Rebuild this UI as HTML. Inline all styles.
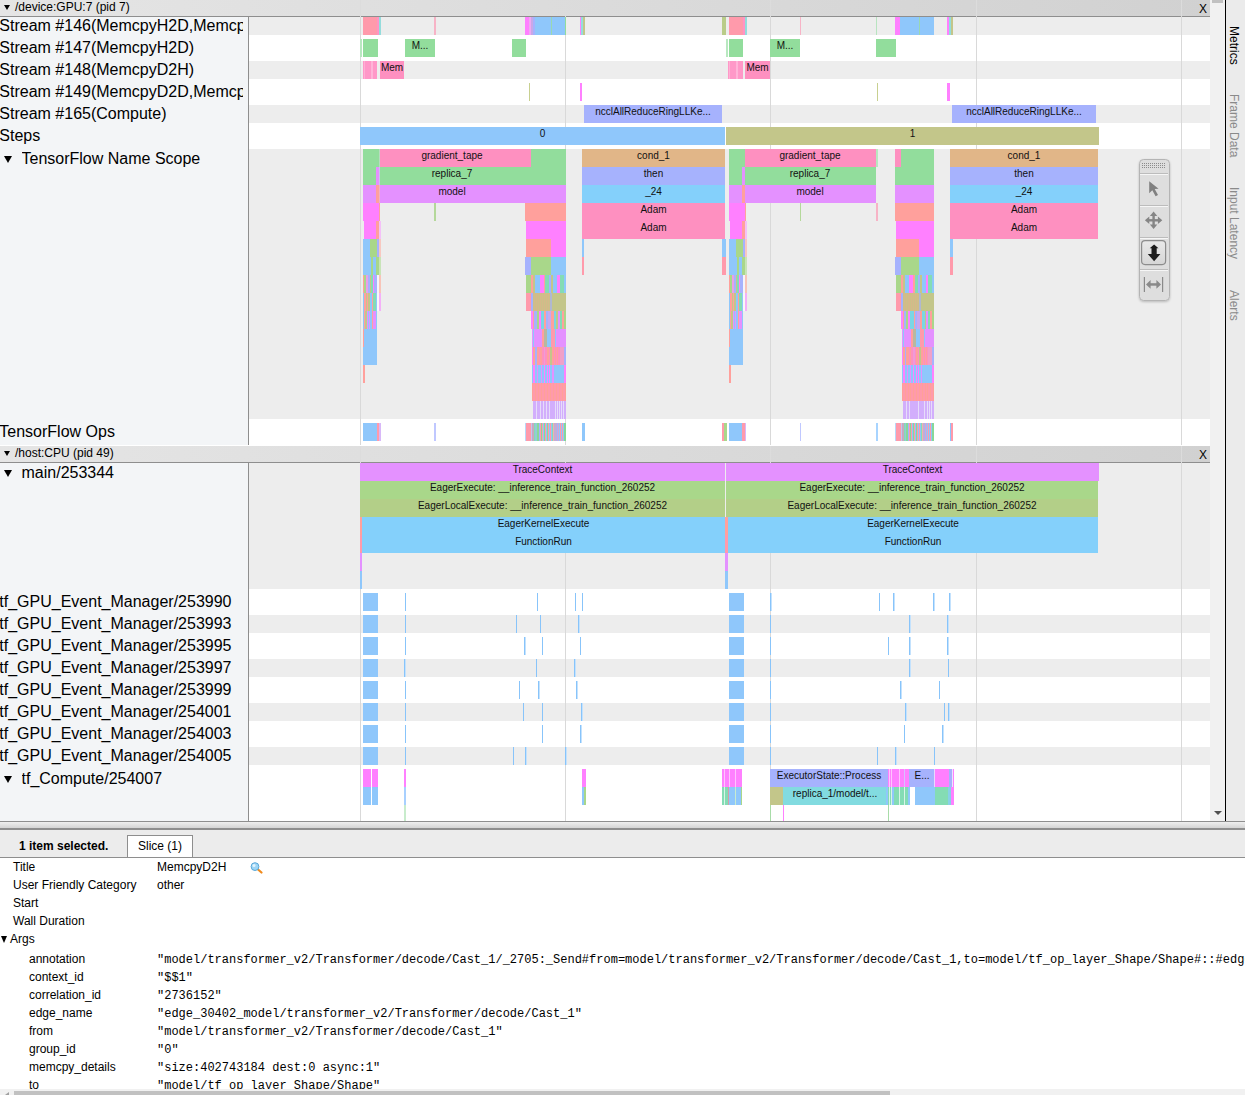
<!DOCTYPE html>
<html><head><meta charset="utf-8">
<style>
html,body{margin:0;padding:0;}
body{width:1245px;height:1095px;overflow:hidden;position:relative;background:#fff;font-family:"Liberation Sans",sans-serif;}
.r{position:absolute;}
.sl{position:absolute;width:300px;height:18px;line-height:13.5px;text-align:center;font-size:10px;color:#111;white-space:nowrap;}
#tv{position:absolute;left:0;top:0;width:1210px;height:821px;overflow:hidden;background:#fff;}
#lab{position:absolute;left:0;top:0;width:248px;height:821px;background:#f3f5f7;border-right:1px solid #8e8e8e;}
.lb{position:absolute;left:0;width:243.7px;height:20px;line-height:20px;font-size:16px;color:#000;white-space:nowrap;overflow:hidden;}
.ltri{position:absolute;left:4px;width:0;height:0;border-left:4px solid transparent;border-right:4px solid transparent;border-top:7px solid #000;}
.htri{position:absolute;left:4px;top:5px;width:0;height:0;border-left:3px solid transparent;border-right:3px solid transparent;border-top:5px solid #000;}
.hdr{position:absolute;left:0;width:1210px;height:16px;background:linear-gradient(to right,#e5e5e5,#d1d1d1);border-bottom:1px solid #8e8e8e;font-size:12px;line-height:15px;color:#000;}
.hdr .t{position:absolute;left:15px;top:0;}
.hdr .x{position:absolute;right:3px;top:1.5px;}
#sb{position:absolute;left:1210px;top:0;width:15px;height:821px;background:#f1f1f1;}
#sbthumb{position:absolute;left:2px;top:0;width:11px;height:3px;background:#c1c1c1;}
#sbdown{position:absolute;left:3.7px;top:810.5px;width:0;height:0;border-left:4px solid transparent;border-right:4px solid transparent;border-top:4.5px solid #505050;}
#vline{position:absolute;left:1225px;top:0;width:1px;height:821px;background:#000;}
#side{position:absolute;left:1226px;top:0;width:19px;height:821px;background:#ebebeb;}
#side .tab{position:absolute;left:1px;width:14px;font-size:12px;color:#8a8a8a;writing-mode:vertical-rl;white-space:nowrap;line-height:14px;}
#drag{position:absolute;left:0;top:821px;width:1245px;height:7px;border-top:1px solid #8e8e8e;border-bottom:2px solid #8e8e8e;background:linear-gradient(#efefef,#d4d4d4);box-sizing:border-box;height:9px;}
#tabs{position:absolute;left:0;top:830px;width:1245px;height:27px;background:#ececec;border-bottom:1px solid #8e8e8e;font-size:12px;}
#sel{position:absolute;left:19px;top:9px;font-weight:bold;}
#slice{position:absolute;left:127px;top:5px;width:64px;height:21px;background:#fff;border:1px solid #8e8e8e;border-bottom:none;text-align:center;line-height:21px;}
#tbl{position:absolute;left:0;top:858px;width:1245px;height:233px;overflow:hidden;font-size:12px;}
#tbl .k{position:absolute;white-space:nowrap;}
#tbl .m{position:absolute;white-space:nowrap;font-family:"Liberation Mono",monospace;}
#hsb{position:absolute;left:0;top:1089px;width:1245px;height:6px;background:#f1f1f1;}
#hsbthumb{position:absolute;left:14px;top:2px;width:876px;height:4px;background:#c1c1c1;}

</style></head><body>
<div id="tv">
<div class="r" style="left:249px;top:17px;width:961px;height:428px;background:#ffffff;"></div><div class="r" style="left:249px;top:17px;width:961px;height:18px;background:#ededed;"></div><div class="r" style="left:249px;top:61px;width:961px;height:18px;background:#ededed;"></div><div class="r" style="left:249px;top:105px;width:961px;height:18px;background:#ededed;"></div><div class="r" style="left:249px;top:149px;width:961px;height:270px;background:#ededed;"></div><div class="r" style="left:249px;top:463px;width:961px;height:358px;background:#ffffff;"></div><div class="r" style="left:249px;top:463px;width:961px;height:126px;background:#ededed;"></div><div class="r" style="left:249px;top:615px;width:961px;height:18px;background:#ededed;"></div><div class="r" style="left:249px;top:659px;width:961px;height:18px;background:#ededed;"></div><div class="r" style="left:249px;top:703px;width:961px;height:18px;background:#ededed;"></div><div class="r" style="left:249px;top:747px;width:961px;height:18px;background:#ededed;"></div><div class="r" style="left:360px;top:0px;width:1px;height:821px;background:#d9d9d9;"></div><div class="r" style="left:565px;top:0px;width:1px;height:821px;background:#d9d9d9;"></div><div class="r" style="left:770px;top:0px;width:1px;height:821px;background:#d9d9d9;"></div><div class="r" style="left:976px;top:0px;width:1px;height:821px;background:#d9d9d9;"></div><div class="r" style="left:1181px;top:0px;width:1px;height:821px;background:#d9d9d9;"></div>
<div id="lab"><div class="lb" style="left:-0.7px;top:16px">Stream #146(MemcpyH2D,MemcpyD2H)</div><div class="lb" style="left:-0.7px;top:38px">Stream #147(MemcpyH2D)</div><div class="lb" style="left:-0.7px;top:60px">Stream #148(MemcpyD2H)</div><div class="lb" style="left:-0.7px;top:82px">Stream #149(MemcpyD2D,MemcpyH2D)</div><div class="lb" style="left:-0.7px;top:104px">Stream #165(Compute)</div><div class="lb" style="left:-0.7px;top:126px">Steps</div><div class="ltri" style="top:156px"></div><div class="lb" style="left:21.5px;top:149px">TensorFlow Name Scope</div><div class="lb" style="left:-0.7px;top:422px">TensorFlow Ops</div><div class="ltri" style="top:470px"></div><div class="lb" style="left:21.5px;top:463px">main/253344</div><div class="lb" style="left:-0.7px;top:592px">tf_GPU_Event_Manager/253990</div><div class="lb" style="left:-0.7px;top:614px">tf_GPU_Event_Manager/253993</div><div class="lb" style="left:-0.7px;top:636px">tf_GPU_Event_Manager/253995</div><div class="lb" style="left:-0.7px;top:658px">tf_GPU_Event_Manager/253997</div><div class="lb" style="left:-0.7px;top:680px">tf_GPU_Event_Manager/253999</div><div class="lb" style="left:-0.7px;top:702px">tf_GPU_Event_Manager/254001</div><div class="lb" style="left:-0.7px;top:724px">tf_GPU_Event_Manager/254003</div><div class="lb" style="left:-0.7px;top:746px">tf_GPU_Event_Manager/254005</div><div class="ltri" style="top:776px"></div><div class="lb" style="left:21.5px;top:769px">tf_Compute/254007</div></div>
<div class="r" style="left:363px;top:17px;width:14px;height:18px;background:#ff9aab;"></div><div class="r" style="left:377px;top:17px;width:2px;height:18px;background:#ff94c4;"></div><div class="r" style="left:379px;top:17px;width:2px;height:18px;background:#94dcdc;"></div><div class="r" style="left:434px;top:17px;width:2px;height:18px;background:#f7b3c6;"></div><div class="r" style="left:525px;top:17px;width:4px;height:18px;background:#ff80ff;"></div><div class="r" style="left:529px;top:17px;width:2px;height:18px;background:#f0a8f0;"></div><div class="r" style="left:531px;top:17px;width:2px;height:18px;background:#c8a8e8;"></div><div class="r" style="left:533px;top:17px;width:2px;height:18px;background:#a6b2fd;"></div><div class="r" style="left:535px;top:17px;width:30px;height:18px;background:#8fc7fb;"></div><div class="r" style="left:551px;top:17px;width:1px;height:18px;background:#9ad8b0;"></div><div class="r" style="left:565px;top:17px;width:1px;height:18px;background:#92dd9c;"></div><div class="r" style="left:580px;top:17px;width:1px;height:18px;background:#ff80ff;"></div><div class="r" style="left:581px;top:17px;width:2px;height:18px;background:#94dcdc;"></div><div class="r" style="left:583px;top:17px;width:2px;height:18px;background:#c3c68a;"></div><div class="r" style="left:722px;top:17px;width:4px;height:18px;background:#b9cc88;"></div><div class="r" style="left:729px;top:17px;width:14px;height:18px;background:#ff9aab;"></div><div class="r" style="left:743px;top:17px;width:2px;height:18px;background:#ff94c4;"></div><div class="r" style="left:745px;top:17px;width:2px;height:18px;background:#94dcdc;"></div><div class="r" style="left:800px;top:17px;width:1px;height:18px;background:#f7b3c6;"></div><div class="r" style="left:876px;top:17px;width:1px;height:18px;background:#b8e4c0;"></div><div class="r" style="left:895px;top:17px;width:5px;height:18px;background:#ff80ff;"></div><div class="r" style="left:900px;top:17px;width:34px;height:18px;background:#8fc7fb;"></div><div class="r" style="left:919px;top:17px;width:1px;height:18px;background:#9ad8b0;"></div><div class="r" style="left:947px;top:17px;width:2px;height:18px;background:#ff80ff;"></div><div class="r" style="left:949px;top:17px;width:2px;height:18px;background:#94dcdc;"></div><div class="r" style="left:951px;top:17px;width:2px;height:18px;background:#c3c68a;"></div><div class="r" style="left:360px;top:39px;width:2px;height:18px;background:#b8e8c0;"></div><div class="r" style="left:363px;top:39px;width:15px;height:18px;background:#92dd9c;"></div><div class="r" style="left:405px;top:39px;width:30px;height:18px;background:#92dd9c;"></div><div class="sl" style="left:270.0px;top:39px">M...</div><div class="r" style="left:512px;top:39px;width:14px;height:18px;background:#92dd9c;"></div><div class="r" style="left:726px;top:39px;width:2px;height:18px;background:#b8e8c0;"></div><div class="r" style="left:729px;top:39px;width:14px;height:18px;background:#92dd9c;"></div><div class="r" style="left:770px;top:39px;width:30px;height:18px;background:#92dd9c;"></div><div class="sl" style="left:635.0px;top:39px">M...</div><div class="r" style="left:876px;top:39px;width:20px;height:18px;background:#92dd9c;"></div><div class="r" style="left:363px;top:61px;width:14px;height:18px;background:#ff98c8;"></div><div class="r" style="left:364px;top:61px;width:1px;height:18px;background:#ffb0d4;"></div><div class="r" style="left:371px;top:61px;width:2px;height:18px;background:#ffb4d8;"></div><div class="r" style="left:380px;top:61px;width:24px;height:18px;background:#fe90c0;"></div><div class="sl" style="left:242.0px;top:61px">Mem</div><div class="r" style="left:728px;top:61px;width:15px;height:18px;background:#ff98c8;"></div><div class="r" style="left:729px;top:61px;width:1px;height:18px;background:#ffb0d4;"></div><div class="r" style="left:736px;top:61px;width:2px;height:18px;background:#ffb4d8;"></div><div class="r" style="left:745px;top:61px;width:25px;height:18px;background:#fe90c0;"></div><div class="sl" style="left:607.5px;top:61px">Mem</div><div class="r" style="left:529px;top:83px;width:1px;height:18px;background:#c8d090;"></div><div class="r" style="left:580px;top:83px;width:2px;height:18px;background:#ff80ff;"></div><div class="r" style="left:877px;top:83px;width:1px;height:18px;background:#c8d090;"></div><div class="r" style="left:947px;top:83px;width:3px;height:18px;background:#ff80ff;"></div><div class="r" style="left:584px;top:105px;width:138px;height:18px;background:#a6b2fd;"></div><div class="sl" style="left:503.0px;top:105px">ncclAllReduceRingLLKe...</div><div class="r" style="left:952px;top:105px;width:144px;height:18px;background:#a6b2fd;"></div><div class="sl" style="left:874.0px;top:105px">ncclAllReduceRingLLKe...</div><div class="r" style="left:360px;top:127px;width:365px;height:18px;background:#8fc7fb;"></div><div class="sl" style="left:392.5px;top:127px">0</div><div class="r" style="left:726px;top:127px;width:373px;height:18px;background:#c3c68a;"></div><div class="sl" style="left:762.5px;top:127px">1</div><div class="r" style="left:363px;top:149px;width:16px;height:18px;background:#92dd9c;"></div><div class="r" style="left:363px;top:167px;width:13px;height:18px;background:#92dd9c;"></div><div class="r" style="left:376px;top:167px;width:3px;height:18px;background:#e491ff;"></div><div class="r" style="left:363px;top:185px;width:13px;height:18px;background:#e491ff;"></div><div class="r" style="left:376px;top:185px;width:3px;height:18px;background:#ffa09c;"></div><div class="r" style="left:363px;top:203px;width:16px;height:18px;background:#ff80ff;"></div><div class="r" style="left:379px;top:203px;width:1px;height:18px;background:#ffa09c;"></div><div class="r" style="left:364px;top:221px;width:12px;height:18px;background:#ff80ff;"></div><div class="r" style="left:376px;top:221px;width:3px;height:18px;background:#ffa09c;"></div><div class="r" style="left:379px;top:221px;width:2px;height:18px;background:#f4c0f8;"></div><div class="r" style="left:363px;top:239px;width:7px;height:18px;background:#8fc7fb;"></div><div class="r" style="left:370px;top:239px;width:7px;height:18px;background:#a9d78a;"></div><div class="r" style="left:377px;top:239px;width:2px;height:18px;background:#a6b2fd;"></div><div class="r" style="left:379px;top:239px;width:2px;height:18px;background:#f8c8c0;"></div><div class="r" style="left:363px;top:257px;width:8px;height:18px;background:#8fc7fb;"></div><div class="r" style="left:371px;top:257px;width:2px;height:18px;background:#a9d78a;"></div><div class="r" style="left:373px;top:257px;width:3px;height:18px;background:#8fc7fb;"></div><div class="r" style="left:376px;top:257px;width:3px;height:18px;background:#a9d78a;"></div><div class="r" style="left:379px;top:257px;width:2px;height:18px;background:#c8e4b8;"></div><div class="r" style="left:363px;top:275px;width:1px;height:18px;background:#ffa09c;"></div><div class="r" style="left:364px;top:275px;width:2px;height:18px;background:#a9d78a;"></div><div class="r" style="left:366px;top:275px;width:2px;height:18px;background:#e8a0e8;"></div><div class="r" style="left:368px;top:275px;width:2px;height:18px;background:#a6b2fd;"></div><div class="r" style="left:370px;top:275px;width:1px;height:18px;background:#c3c68a;"></div><div class="r" style="left:371px;top:275px;width:2px;height:18px;background:#84dcb4;"></div><div class="r" style="left:373px;top:275px;width:1px;height:18px;background:#ff80ff;"></div><div class="r" style="left:374px;top:275px;width:3px;height:18px;background:#a6b2fd;"></div><div class="r" style="left:377px;top:275px;width:2px;height:18px;background:#f4f4fa;"></div><div class="r" style="left:379px;top:275px;width:2px;height:18px;background:#f8c4b8;"></div><div class="r" style="left:363px;top:293px;width:1px;height:18px;background:#8fc7fb;"></div><div class="r" style="left:364px;top:293px;width:2px;height:18px;background:#ffa09c;"></div><div class="r" style="left:366px;top:293px;width:1px;height:18px;background:#c3c68a;"></div><div class="r" style="left:367px;top:293px;width:1px;height:18px;background:#ffa09c;"></div><div class="r" style="left:368px;top:293px;width:2px;height:18px;background:#c3c68a;"></div><div class="r" style="left:370px;top:293px;width:2px;height:18px;background:#8fc7fb;"></div><div class="r" style="left:372px;top:293px;width:1px;height:18px;background:#ffa09c;"></div><div class="r" style="left:373px;top:293px;width:3px;height:18px;background:#84dcb4;"></div><div class="r" style="left:376px;top:293px;width:1px;height:18px;background:#8fc7fb;"></div><div class="r" style="left:377px;top:293px;width:2px;height:18px;background:#f8f8f8;"></div><div class="r" style="left:379px;top:293px;width:2px;height:18px;background:#f4b0f8;"></div><div class="r" style="left:363px;top:311px;width:1px;height:18px;background:#8fc7fb;"></div><div class="r" style="left:364px;top:311px;width:1px;height:18px;background:#ffa09c;"></div><div class="r" style="left:365px;top:311px;width:2px;height:18px;background:#c3c68a;"></div><div class="r" style="left:367px;top:311px;width:1px;height:18px;background:#e491ff;"></div><div class="r" style="left:368px;top:311px;width:1px;height:18px;background:#8fc7fb;"></div><div class="r" style="left:369px;top:311px;width:1px;height:18px;background:#e491ff;"></div><div class="r" style="left:370px;top:311px;width:2px;height:18px;background:#8fc7fb;"></div><div class="r" style="left:372px;top:311px;width:1px;height:18px;background:#ffa09c;"></div><div class="r" style="left:373px;top:311px;width:3px;height:18px;background:#e491ff;"></div><div class="r" style="left:376px;top:311px;width:1px;height:18px;background:#8fc7fb;"></div><div class="r" style="left:363px;top:329px;width:1px;height:18px;background:#ffa09c;"></div><div class="r" style="left:364px;top:329px;width:13px;height:18px;background:#8fc7fb;"></div><div class="r" style="left:363px;top:347px;width:14px;height:18px;background:#8fc7fb;"></div><div class="r" style="left:363px;top:365px;width:2px;height:18px;background:#ffa09c;"></div><div class="r" style="left:729px;top:149px;width:16px;height:18px;background:#92dd9c;"></div><div class="r" style="left:729px;top:167px;width:13px;height:18px;background:#92dd9c;"></div><div class="r" style="left:742px;top:167px;width:3px;height:18px;background:#e491ff;"></div><div class="r" style="left:729px;top:185px;width:13px;height:18px;background:#e491ff;"></div><div class="r" style="left:742px;top:185px;width:3px;height:18px;background:#ffa09c;"></div><div class="r" style="left:729px;top:203px;width:16px;height:18px;background:#ff80ff;"></div><div class="r" style="left:745px;top:203px;width:1px;height:18px;background:#ffa09c;"></div><div class="r" style="left:730px;top:221px;width:12px;height:18px;background:#ff80ff;"></div><div class="r" style="left:742px;top:221px;width:3px;height:18px;background:#ffa09c;"></div><div class="r" style="left:745px;top:221px;width:2px;height:18px;background:#f4c0f8;"></div><div class="r" style="left:729px;top:239px;width:7px;height:18px;background:#8fc7fb;"></div><div class="r" style="left:736px;top:239px;width:7px;height:18px;background:#a9d78a;"></div><div class="r" style="left:743px;top:239px;width:2px;height:18px;background:#a6b2fd;"></div><div class="r" style="left:745px;top:239px;width:2px;height:18px;background:#f8c8c0;"></div><div class="r" style="left:729px;top:257px;width:8px;height:18px;background:#8fc7fb;"></div><div class="r" style="left:737px;top:257px;width:2px;height:18px;background:#a9d78a;"></div><div class="r" style="left:739px;top:257px;width:3px;height:18px;background:#8fc7fb;"></div><div class="r" style="left:742px;top:257px;width:3px;height:18px;background:#a9d78a;"></div><div class="r" style="left:745px;top:257px;width:2px;height:18px;background:#c8e4b8;"></div><div class="r" style="left:729px;top:275px;width:1px;height:18px;background:#ffa09c;"></div><div class="r" style="left:730px;top:275px;width:2px;height:18px;background:#a9d78a;"></div><div class="r" style="left:732px;top:275px;width:2px;height:18px;background:#e8a0e8;"></div><div class="r" style="left:734px;top:275px;width:2px;height:18px;background:#a6b2fd;"></div><div class="r" style="left:736px;top:275px;width:1px;height:18px;background:#c3c68a;"></div><div class="r" style="left:737px;top:275px;width:2px;height:18px;background:#84dcb4;"></div><div class="r" style="left:739px;top:275px;width:1px;height:18px;background:#ff80ff;"></div><div class="r" style="left:740px;top:275px;width:3px;height:18px;background:#a6b2fd;"></div><div class="r" style="left:743px;top:275px;width:2px;height:18px;background:#f4f4fa;"></div><div class="r" style="left:745px;top:275px;width:2px;height:18px;background:#f8c4b8;"></div><div class="r" style="left:729px;top:293px;width:1px;height:18px;background:#8fc7fb;"></div><div class="r" style="left:730px;top:293px;width:2px;height:18px;background:#ffa09c;"></div><div class="r" style="left:732px;top:293px;width:1px;height:18px;background:#c3c68a;"></div><div class="r" style="left:733px;top:293px;width:1px;height:18px;background:#ffa09c;"></div><div class="r" style="left:734px;top:293px;width:2px;height:18px;background:#c3c68a;"></div><div class="r" style="left:736px;top:293px;width:2px;height:18px;background:#8fc7fb;"></div><div class="r" style="left:738px;top:293px;width:1px;height:18px;background:#ffa09c;"></div><div class="r" style="left:739px;top:293px;width:3px;height:18px;background:#84dcb4;"></div><div class="r" style="left:742px;top:293px;width:1px;height:18px;background:#8fc7fb;"></div><div class="r" style="left:743px;top:293px;width:2px;height:18px;background:#f8f8f8;"></div><div class="r" style="left:745px;top:293px;width:2px;height:18px;background:#f4b0f8;"></div><div class="r" style="left:729px;top:311px;width:1px;height:18px;background:#8fc7fb;"></div><div class="r" style="left:730px;top:311px;width:1px;height:18px;background:#ffa09c;"></div><div class="r" style="left:731px;top:311px;width:2px;height:18px;background:#c3c68a;"></div><div class="r" style="left:733px;top:311px;width:1px;height:18px;background:#e491ff;"></div><div class="r" style="left:734px;top:311px;width:1px;height:18px;background:#8fc7fb;"></div><div class="r" style="left:735px;top:311px;width:1px;height:18px;background:#e491ff;"></div><div class="r" style="left:736px;top:311px;width:2px;height:18px;background:#8fc7fb;"></div><div class="r" style="left:738px;top:311px;width:1px;height:18px;background:#ffa09c;"></div><div class="r" style="left:739px;top:311px;width:3px;height:18px;background:#e491ff;"></div><div class="r" style="left:742px;top:311px;width:1px;height:18px;background:#8fc7fb;"></div><div class="r" style="left:729px;top:329px;width:1px;height:18px;background:#ffa09c;"></div><div class="r" style="left:730px;top:329px;width:13px;height:18px;background:#8fc7fb;"></div><div class="r" style="left:729px;top:347px;width:14px;height:18px;background:#8fc7fb;"></div><div class="r" style="left:729px;top:365px;width:2px;height:18px;background:#ffa09c;"></div><div class="r" style="left:380px;top:149px;width:145px;height:18px;background:#fe90c0;"></div><div class="sl" style="left:302px;top:149px">gradient_tape</div><div class="r" style="left:379px;top:149px;width:1px;height:18px;background:#b8dcc0;"></div><div class="r" style="left:525px;top:149px;width:6px;height:18px;background:#fe98c4;"></div><div class="r" style="left:531px;top:149px;width:35px;height:18px;background:#92dd9c;"></div><div class="r" style="left:380px;top:167px;width:186px;height:18px;background:#92dd9c;"></div><div class="sl" style="left:302px;top:167px">replica_7</div><div class="r" style="left:379px;top:167px;width:1px;height:18px;background:#c8c8e8;"></div><div class="r" style="left:380px;top:185px;width:186px;height:18px;background:#e491ff;"></div><div class="sl" style="left:302px;top:185px">model</div><div class="r" style="left:379px;top:185px;width:1px;height:18px;background:#f0b0c8;"></div><div class="r" style="left:434px;top:203px;width:2px;height:18px;background:#b4d89a;"></div><div class="r" style="left:745px;top:149px;width:131px;height:18px;background:#fe90c0;"></div><div class="sl" style="left:660px;top:149px">gradient_tape</div><div class="r" style="left:876px;top:149px;width:2px;height:18px;background:#b8e8c0;"></div><div class="r" style="left:745px;top:167px;width:131px;height:18px;background:#92dd9c;"></div><div class="sl" style="left:660px;top:167px">replica_7</div><div class="r" style="left:745px;top:185px;width:131px;height:18px;background:#e491ff;"></div><div class="sl" style="left:660px;top:185px">model</div><div class="r" style="left:800px;top:203px;width:1px;height:18px;background:#b4d89a;"></div><div class="r" style="left:876px;top:203px;width:2px;height:18px;background:#f7b3c6;"></div><div class="r" style="left:525px;top:149px;width:6px;height:18px;background:#fe90c0;"></div><div class="r" style="left:531px;top:149px;width:35px;height:18px;background:#92dd9c;"></div><div class="r" style="left:525px;top:167px;width:41px;height:18px;background:#92dd9c;"></div><div class="r" style="left:525px;top:185px;width:41px;height:18px;background:#e491ff;"></div><div class="r" style="left:525px;top:203px;width:41px;height:18px;background:#ffa09c;"></div><div class="r" style="left:526px;top:221px;width:40px;height:18px;background:#ff80ff;"></div><div class="r" style="left:526px;top:239px;width:25px;height:18px;background:#ffa09c;"></div><div class="r" style="left:551px;top:239px;width:15px;height:18px;background:#ff80ff;"></div><div class="r" style="left:525px;top:257px;width:6px;height:18px;background:#a6b2fd;"></div><div class="r" style="left:531px;top:257px;width:20px;height:18px;background:#a9d78a;"></div><div class="r" style="left:551px;top:257px;width:15px;height:18px;background:#8fc7fb;"></div><div class="r" style="left:526px;top:275px;width:5px;height:18px;background:#a9d78a;"></div><div class="r" style="left:526px;top:293px;width:5px;height:18px;background:#ff9aab;"></div><div class="r" style="left:531px;top:275px;width:2px;height:18px;background:#ffa09c;"></div><div class="r" style="left:533px;top:275px;width:2px;height:18px;background:#c3c68a;"></div><div class="r" style="left:535px;top:275px;width:5px;height:18px;background:#8fc7fb;"></div><div class="r" style="left:540px;top:275px;width:4px;height:18px;background:#ff80ff;"></div><div class="r" style="left:544px;top:275px;width:1px;height:18px;background:#ffa09c;"></div><div class="r" style="left:545px;top:275px;width:4px;height:18px;background:#84dcb4;"></div><div class="r" style="left:549px;top:275px;width:2px;height:18px;background:#a6b2fd;"></div><div class="r" style="left:551px;top:275px;width:2px;height:18px;background:#c3c68a;"></div><div class="r" style="left:553px;top:275px;width:4px;height:18px;background:#8fc7fb;"></div><div class="r" style="left:557px;top:275px;width:3px;height:18px;background:#ff80ff;"></div><div class="r" style="left:560px;top:275px;width:4px;height:18px;background:#84dcb4;"></div><div class="r" style="left:564px;top:275px;width:2px;height:18px;background:#8fc7fb;"></div><div class="r" style="left:531px;top:293px;width:2px;height:18px;background:#a6b2fd;"></div><div class="r" style="left:533px;top:293px;width:1px;height:18px;background:#cbc088;"></div><div class="r" style="left:534px;top:293px;width:1px;height:18px;background:#d6b88a;"></div><div class="r" style="left:535px;top:293px;width:1px;height:18px;background:#cbc088;"></div><div class="r" style="left:536px;top:293px;width:1px;height:18px;background:#d6b88a;"></div><div class="r" style="left:537px;top:293px;width:1px;height:18px;background:#cbc088;"></div><div class="r" style="left:538px;top:293px;width:1px;height:18px;background:#d6b88a;"></div><div class="r" style="left:539px;top:293px;width:1px;height:18px;background:#cbc088;"></div><div class="r" style="left:540px;top:293px;width:1px;height:18px;background:#d6b88a;"></div><div class="r" style="left:541px;top:293px;width:1px;height:18px;background:#cbc088;"></div><div class="r" style="left:542px;top:293px;width:1px;height:18px;background:#d6b88a;"></div><div class="r" style="left:543px;top:293px;width:1px;height:18px;background:#cbc088;"></div><div class="r" style="left:544px;top:293px;width:1px;height:18px;background:#d6b88a;"></div><div class="r" style="left:545px;top:293px;width:1px;height:18px;background:#cbc088;"></div><div class="r" style="left:546px;top:293px;width:1px;height:18px;background:#d6b88a;"></div><div class="r" style="left:547px;top:293px;width:1px;height:18px;background:#cbc088;"></div><div class="r" style="left:548px;top:293px;width:1px;height:18px;background:#d6b88a;"></div><div class="r" style="left:549px;top:293px;width:1px;height:18px;background:#cbc088;"></div><div class="r" style="left:550px;top:293px;width:2px;height:18px;background:#b0b8d0;"></div><div class="r" style="left:552px;top:293px;width:14px;height:18px;background:#c3c68a;"></div><div class="r" style="left:531px;top:311px;width:2px;height:18px;background:#ff80ff;"></div><div class="r" style="left:533px;top:311px;width:1px;height:18px;background:#ffa09c;"></div><div class="r" style="left:534px;top:311px;width:3px;height:18px;background:#a6b2fd;"></div><div class="r" style="left:537px;top:311px;width:2px;height:18px;background:#a9d78a;"></div><div class="r" style="left:539px;top:311px;width:2px;height:18px;background:#ff80ff;"></div><div class="r" style="left:541px;top:311px;width:3px;height:18px;background:#7ad6e4;"></div><div class="r" style="left:544px;top:311px;width:2px;height:18px;background:#ffa09c;"></div><div class="r" style="left:546px;top:311px;width:2px;height:18px;background:#a6b2fd;"></div><div class="r" style="left:548px;top:311px;width:3px;height:18px;background:#c8a8f0;"></div><div class="r" style="left:551px;top:311px;width:3px;height:18px;background:#ffa09c;"></div><div class="r" style="left:554px;top:311px;width:2px;height:18px;background:#7ad6e4;"></div><div class="r" style="left:556px;top:311px;width:2px;height:18px;background:#c3c68a;"></div><div class="r" style="left:558px;top:311px;width:2px;height:18px;background:#e491ff;"></div><div class="r" style="left:560px;top:311px;width:2px;height:18px;background:#84dcb4;"></div><div class="r" style="left:562px;top:311px;width:2px;height:18px;background:#ffa09c;"></div><div class="r" style="left:564px;top:311px;width:2px;height:18px;background:#a9d78a;"></div><div class="r" style="left:532px;top:329px;width:1px;height:18px;background:#e491ff;"></div><div class="r" style="left:533px;top:329px;width:1px;height:18px;background:#8fc7fb;"></div><div class="r" style="left:534px;top:329px;width:8px;height:18px;background:#e491ff;"></div><div class="r" style="left:542px;top:329px;width:2px;height:18px;background:#ffa09c;"></div><div class="r" style="left:544px;top:329px;width:3px;height:18px;background:#b8b8a0;"></div><div class="r" style="left:547px;top:329px;width:4px;height:18px;background:#8fc7fb;"></div><div class="r" style="left:551px;top:329px;width:4px;height:18px;background:#ff9aab;"></div><div class="r" style="left:555px;top:329px;width:1px;height:18px;background:#8fc7fb;"></div><div class="r" style="left:556px;top:329px;width:10px;height:18px;background:#e491ff;"></div><div class="r" style="left:532px;top:347px;width:1px;height:18px;background:#ff80ff;"></div><div class="r" style="left:533px;top:347px;width:2px;height:18px;background:#ffa09c;"></div><div class="r" style="left:535px;top:347px;width:2px;height:18px;background:#a6b2fd;"></div><div class="r" style="left:537px;top:347px;width:2px;height:18px;background:#ffa09c;"></div><div class="r" style="left:539px;top:347px;width:1px;height:18px;background:#fe90c0;"></div><div class="r" style="left:540px;top:347px;width:2px;height:18px;background:#ffa09c;"></div><div class="r" style="left:542px;top:347px;width:2px;height:18px;background:#fe90c0;"></div><div class="r" style="left:544px;top:347px;width:1px;height:18px;background:#f09ad8;"></div><div class="r" style="left:545px;top:347px;width:2px;height:18px;background:#fe90c0;"></div><div class="r" style="left:547px;top:347px;width:2px;height:18px;background:#ffa09c;"></div><div class="r" style="left:549px;top:347px;width:1px;height:18px;background:#fe90c0;"></div><div class="r" style="left:550px;top:347px;width:2px;height:18px;background:#c3c68a;"></div><div class="r" style="left:552px;top:347px;width:2px;height:18px;background:#ffa09c;"></div><div class="r" style="left:554px;top:347px;width:1px;height:18px;background:#fe90c0;"></div><div class="r" style="left:555px;top:347px;width:1px;height:18px;background:#ffa09c;"></div><div class="r" style="left:556px;top:347px;width:1px;height:18px;background:#fe90c0;"></div><div class="r" style="left:557px;top:347px;width:1px;height:18px;background:#ffa09c;"></div><div class="r" style="left:558px;top:347px;width:2px;height:18px;background:#fe90c0;"></div><div class="r" style="left:560px;top:347px;width:4px;height:18px;background:#f0a0c8;"></div><div class="r" style="left:564px;top:347px;width:2px;height:18px;background:#a6b2fd;"></div><div class="r" style="left:532px;top:365px;width:1px;height:18px;background:#8fc7fb;"></div><div class="r" style="left:533px;top:365px;width:2px;height:18px;background:#ff80ff;"></div><div class="r" style="left:535px;top:365px;width:2px;height:18px;background:#8fc7fb;"></div><div class="r" style="left:537px;top:365px;width:1px;height:18px;background:#e491ff;"></div><div class="r" style="left:538px;top:365px;width:3px;height:18px;background:#8fc7fb;"></div><div class="r" style="left:541px;top:365px;width:1px;height:18px;background:#e491ff;"></div><div class="r" style="left:542px;top:365px;width:2px;height:18px;background:#8fc7fb;"></div><div class="r" style="left:544px;top:365px;width:1px;height:18px;background:#ff80ff;"></div><div class="r" style="left:545px;top:365px;width:2px;height:18px;background:#8fc7fb;"></div><div class="r" style="left:547px;top:365px;width:1px;height:18px;background:#ff80ff;"></div><div class="r" style="left:548px;top:365px;width:1px;height:18px;background:#8fc7fb;"></div><div class="r" style="left:549px;top:365px;width:1px;height:18px;background:#ff80ff;"></div><div class="r" style="left:550px;top:365px;width:2px;height:18px;background:#8fc7fb;"></div><div class="r" style="left:552px;top:365px;width:2px;height:18px;background:#e491ff;"></div><div class="r" style="left:554px;top:365px;width:10px;height:18px;background:#8fc7fb;"></div><div class="r" style="left:564px;top:365px;width:2px;height:18px;background:#ff80ff;"></div><div class="r" style="left:532px;top:383px;width:1px;height:18px;background:#ffa098;"></div><div class="r" style="left:533px;top:383px;width:1px;height:18px;background:#ff9aab;"></div><div class="r" style="left:534px;top:383px;width:1px;height:18px;background:#ff9aab;"></div><div class="r" style="left:535px;top:383px;width:1px;height:18px;background:#ffa098;"></div><div class="r" style="left:536px;top:383px;width:1px;height:18px;background:#ff9aab;"></div><div class="r" style="left:537px;top:383px;width:1px;height:18px;background:#ff9aab;"></div><div class="r" style="left:538px;top:383px;width:1px;height:18px;background:#ffa098;"></div><div class="r" style="left:539px;top:383px;width:1px;height:18px;background:#ff9aab;"></div><div class="r" style="left:540px;top:383px;width:1px;height:18px;background:#ff9aab;"></div><div class="r" style="left:541px;top:383px;width:1px;height:18px;background:#ffa098;"></div><div class="r" style="left:542px;top:383px;width:1px;height:18px;background:#ff9aab;"></div><div class="r" style="left:543px;top:383px;width:1px;height:18px;background:#ff9aab;"></div><div class="r" style="left:544px;top:383px;width:1px;height:18px;background:#ffa098;"></div><div class="r" style="left:545px;top:383px;width:1px;height:18px;background:#ff9aab;"></div><div class="r" style="left:546px;top:383px;width:1px;height:18px;background:#ff9aab;"></div><div class="r" style="left:547px;top:383px;width:1px;height:18px;background:#ffa098;"></div><div class="r" style="left:548px;top:383px;width:1px;height:18px;background:#ff9aab;"></div><div class="r" style="left:549px;top:383px;width:1px;height:18px;background:#ff9aab;"></div><div class="r" style="left:550px;top:383px;width:1px;height:18px;background:#ffa098;"></div><div class="r" style="left:551px;top:383px;width:1px;height:18px;background:#ff9aab;"></div><div class="r" style="left:552px;top:383px;width:1px;height:18px;background:#ff9aab;"></div><div class="r" style="left:553px;top:383px;width:1px;height:18px;background:#ffa098;"></div><div class="r" style="left:554px;top:383px;width:1px;height:18px;background:#ff9aab;"></div><div class="r" style="left:555px;top:383px;width:1px;height:18px;background:#ff9aab;"></div><div class="r" style="left:556px;top:383px;width:1px;height:18px;background:#ffa098;"></div><div class="r" style="left:557px;top:383px;width:1px;height:18px;background:#ff9aab;"></div><div class="r" style="left:558px;top:383px;width:1px;height:18px;background:#ff9aab;"></div><div class="r" style="left:559px;top:383px;width:1px;height:18px;background:#ffa098;"></div><div class="r" style="left:560px;top:383px;width:1px;height:18px;background:#ff9aab;"></div><div class="r" style="left:561px;top:383px;width:1px;height:18px;background:#ff9aab;"></div><div class="r" style="left:562px;top:383px;width:1px;height:18px;background:#ffa098;"></div><div class="r" style="left:563px;top:383px;width:1px;height:18px;background:#ff9aab;"></div><div class="r" style="left:564px;top:383px;width:1px;height:18px;background:#ff9aab;"></div><div class="r" style="left:565px;top:383px;width:1px;height:18px;background:#ffa098;"></div><div class="r" style="left:533px;top:401px;width:3px;height:18px;background:#d2aefc;"></div><div class="r" style="left:536px;top:401px;width:1px;height:18px;background:#e6dcfa;"></div><div class="r" style="left:537px;top:401px;width:3px;height:18px;background:#d2aefc;"></div><div class="r" style="left:540px;top:401px;width:1px;height:18px;background:#e6dcfa;"></div><div class="r" style="left:541px;top:401px;width:2px;height:18px;background:#d2aefc;"></div><div class="r" style="left:543px;top:401px;width:1px;height:18px;background:#e6dcfa;"></div><div class="r" style="left:544px;top:401px;width:2px;height:18px;background:#d2aefc;"></div><div class="r" style="left:546px;top:401px;width:1px;height:18px;background:#e6dcfa;"></div><div class="r" style="left:547px;top:401px;width:2px;height:18px;background:#d2aefc;"></div><div class="r" style="left:549px;top:401px;width:1px;height:18px;background:#e6dcfa;"></div><div class="r" style="left:550px;top:401px;width:5px;height:18px;background:#d2aefc;"></div><div class="r" style="left:555px;top:401px;width:1px;height:18px;background:#e6dcfa;"></div><div class="r" style="left:556px;top:401px;width:1px;height:18px;background:#d2aefc;"></div><div class="r" style="left:557px;top:401px;width:1px;height:18px;background:#e6dcfa;"></div><div class="r" style="left:558px;top:401px;width:1px;height:18px;background:#d2aefc;"></div><div class="r" style="left:559px;top:401px;width:1px;height:18px;background:#e6dcfa;"></div><div class="r" style="left:560px;top:401px;width:1px;height:18px;background:#d2aefc;"></div><div class="r" style="left:561px;top:401px;width:1px;height:18px;background:#e6dcfa;"></div><div class="r" style="left:562px;top:401px;width:1px;height:18px;background:#d2aefc;"></div><div class="r" style="left:563px;top:401px;width:1px;height:18px;background:#e6dcfa;"></div><div class="r" style="left:564px;top:401px;width:2px;height:18px;background:#d2aefc;"></div><div class="r" style="left:895px;top:149px;width:6px;height:18px;background:#fe90c0;"></div><div class="r" style="left:901px;top:149px;width:33px;height:18px;background:#92dd9c;"></div><div class="r" style="left:895px;top:167px;width:39px;height:18px;background:#92dd9c;"></div><div class="r" style="left:895px;top:185px;width:39px;height:18px;background:#e491ff;"></div><div class="r" style="left:895px;top:203px;width:39px;height:18px;background:#ffa09c;"></div><div class="r" style="left:896px;top:221px;width:38px;height:18px;background:#ff80ff;"></div><div class="r" style="left:896px;top:239px;width:23px;height:18px;background:#ffa09c;"></div><div class="r" style="left:919px;top:239px;width:15px;height:18px;background:#ff80ff;"></div><div class="r" style="left:895px;top:257px;width:6px;height:18px;background:#a6b2fd;"></div><div class="r" style="left:901px;top:257px;width:18px;height:18px;background:#a9d78a;"></div><div class="r" style="left:919px;top:257px;width:15px;height:18px;background:#8fc7fb;"></div><div class="r" style="left:896px;top:275px;width:5px;height:18px;background:#a9d78a;"></div><div class="r" style="left:896px;top:293px;width:5px;height:18px;background:#ff9aab;"></div><div class="r" style="left:901px;top:275px;width:2px;height:18px;background:#ffa09c;"></div><div class="r" style="left:903px;top:275px;width:2px;height:18px;background:#c3c68a;"></div><div class="r" style="left:905px;top:275px;width:4px;height:18px;background:#8fc7fb;"></div><div class="r" style="left:909px;top:275px;width:4px;height:18px;background:#ff80ff;"></div><div class="r" style="left:913px;top:275px;width:2px;height:18px;background:#ffa09c;"></div><div class="r" style="left:915px;top:275px;width:3px;height:18px;background:#84dcb4;"></div><div class="r" style="left:918px;top:275px;width:2px;height:18px;background:#a6b2fd;"></div><div class="r" style="left:920px;top:275px;width:2px;height:18px;background:#c3c68a;"></div><div class="r" style="left:922px;top:275px;width:4px;height:18px;background:#8fc7fb;"></div><div class="r" style="left:926px;top:275px;width:2px;height:18px;background:#ff80ff;"></div><div class="r" style="left:928px;top:275px;width:4px;height:18px;background:#84dcb4;"></div><div class="r" style="left:932px;top:275px;width:2px;height:18px;background:#8fc7fb;"></div><div class="r" style="left:901px;top:293px;width:2px;height:18px;background:#a6b2fd;"></div><div class="r" style="left:903px;top:293px;width:1px;height:18px;background:#cbc088;"></div><div class="r" style="left:904px;top:293px;width:1px;height:18px;background:#d6b88a;"></div><div class="r" style="left:905px;top:293px;width:1px;height:18px;background:#cbc088;"></div><div class="r" style="left:906px;top:293px;width:1px;height:18px;background:#d6b88a;"></div><div class="r" style="left:907px;top:293px;width:1px;height:18px;background:#cbc088;"></div><div class="r" style="left:908px;top:293px;width:1px;height:18px;background:#d6b88a;"></div><div class="r" style="left:909px;top:293px;width:1px;height:18px;background:#cbc088;"></div><div class="r" style="left:909px;top:293px;width:1px;height:18px;background:#d6b88a;"></div><div class="r" style="left:910px;top:293px;width:1px;height:18px;background:#cbc088;"></div><div class="r" style="left:911px;top:293px;width:1px;height:18px;background:#d6b88a;"></div><div class="r" style="left:912px;top:293px;width:1px;height:18px;background:#cbc088;"></div><div class="r" style="left:913px;top:293px;width:1px;height:18px;background:#d6b88a;"></div><div class="r" style="left:914px;top:293px;width:1px;height:18px;background:#cbc088;"></div><div class="r" style="left:915px;top:293px;width:1px;height:18px;background:#d6b88a;"></div><div class="r" style="left:916px;top:293px;width:1px;height:18px;background:#cbc088;"></div><div class="r" style="left:917px;top:293px;width:1px;height:18px;background:#d6b88a;"></div><div class="r" style="left:918px;top:293px;width:1px;height:18px;background:#cbc088;"></div><div class="r" style="left:919px;top:293px;width:2px;height:18px;background:#b0b8d0;"></div><div class="r" style="left:921px;top:293px;width:13px;height:18px;background:#c3c68a;"></div><div class="r" style="left:901px;top:311px;width:2px;height:18px;background:#ff80ff;"></div><div class="r" style="left:903px;top:311px;width:1px;height:18px;background:#ffa09c;"></div><div class="r" style="left:904px;top:311px;width:2px;height:18px;background:#a6b2fd;"></div><div class="r" style="left:906px;top:311px;width:2px;height:18px;background:#a9d78a;"></div><div class="r" style="left:908px;top:311px;width:2px;height:18px;background:#ff80ff;"></div><div class="r" style="left:910px;top:311px;width:4px;height:18px;background:#7ad6e4;"></div><div class="r" style="left:914px;top:311px;width:1px;height:18px;background:#ffa09c;"></div><div class="r" style="left:915px;top:311px;width:2px;height:18px;background:#a6b2fd;"></div><div class="r" style="left:917px;top:311px;width:3px;height:18px;background:#c8a8f0;"></div><div class="r" style="left:920px;top:311px;width:2px;height:18px;background:#ffa09c;"></div><div class="r" style="left:922px;top:311px;width:3px;height:18px;background:#7ad6e4;"></div><div class="r" style="left:925px;top:311px;width:1px;height:18px;background:#c3c68a;"></div><div class="r" style="left:926px;top:311px;width:2px;height:18px;background:#e491ff;"></div><div class="r" style="left:928px;top:311px;width:2px;height:18px;background:#84dcb4;"></div><div class="r" style="left:930px;top:311px;width:2px;height:18px;background:#ffa09c;"></div><div class="r" style="left:932px;top:311px;width:2px;height:18px;background:#a9d78a;"></div><div class="r" style="left:902px;top:329px;width:1px;height:18px;background:#e491ff;"></div><div class="r" style="left:903px;top:329px;width:1px;height:18px;background:#8fc7fb;"></div><div class="r" style="left:904px;top:329px;width:7px;height:18px;background:#e491ff;"></div><div class="r" style="left:911px;top:329px;width:2px;height:18px;background:#ffa09c;"></div><div class="r" style="left:913px;top:329px;width:3px;height:18px;background:#b8b8a0;"></div><div class="r" style="left:916px;top:329px;width:4px;height:18px;background:#8fc7fb;"></div><div class="r" style="left:920px;top:329px;width:4px;height:18px;background:#ff9aab;"></div><div class="r" style="left:924px;top:329px;width:1px;height:18px;background:#8fc7fb;"></div><div class="r" style="left:925px;top:329px;width:9px;height:18px;background:#e491ff;"></div><div class="r" style="left:902px;top:347px;width:1px;height:18px;background:#ff80ff;"></div><div class="r" style="left:903px;top:347px;width:2px;height:18px;background:#ffa09c;"></div><div class="r" style="left:905px;top:347px;width:1px;height:18px;background:#a6b2fd;"></div><div class="r" style="left:906px;top:347px;width:3px;height:18px;background:#ffa09c;"></div><div class="r" style="left:909px;top:347px;width:1px;height:18px;background:#fe90c0;"></div><div class="r" style="left:910px;top:347px;width:1px;height:18px;background:#ffa09c;"></div><div class="r" style="left:911px;top:347px;width:2px;height:18px;background:#fe90c0;"></div><div class="r" style="left:913px;top:347px;width:2px;height:18px;background:#f09ad8;"></div><div class="r" style="left:915px;top:347px;width:1px;height:18px;background:#fe90c0;"></div><div class="r" style="left:916px;top:347px;width:2px;height:18px;background:#ffa09c;"></div><div class="r" style="left:918px;top:347px;width:1px;height:18px;background:#fe90c0;"></div><div class="r" style="left:919px;top:347px;width:2px;height:18px;background:#c3c68a;"></div><div class="r" style="left:921px;top:347px;width:2px;height:18px;background:#ffa09c;"></div><div class="r" style="left:923px;top:347px;width:1px;height:18px;background:#fe90c0;"></div><div class="r" style="left:924px;top:347px;width:1px;height:18px;background:#ffa09c;"></div><div class="r" style="left:925px;top:347px;width:1px;height:18px;background:#fe90c0;"></div><div class="r" style="left:926px;top:347px;width:1px;height:18px;background:#ffa09c;"></div><div class="r" style="left:927px;top:347px;width:1px;height:18px;background:#fe90c0;"></div><div class="r" style="left:928px;top:347px;width:4px;height:18px;background:#f0a0c8;"></div><div class="r" style="left:932px;top:347px;width:2px;height:18px;background:#a6b2fd;"></div><div class="r" style="left:902px;top:365px;width:1px;height:18px;background:#8fc7fb;"></div><div class="r" style="left:903px;top:365px;width:2px;height:18px;background:#ff80ff;"></div><div class="r" style="left:905px;top:365px;width:2px;height:18px;background:#8fc7fb;"></div><div class="r" style="left:907px;top:365px;width:1px;height:18px;background:#e491ff;"></div><div class="r" style="left:908px;top:365px;width:2px;height:18px;background:#8fc7fb;"></div><div class="r" style="left:910px;top:365px;width:1px;height:18px;background:#e491ff;"></div><div class="r" style="left:911px;top:365px;width:2px;height:18px;background:#8fc7fb;"></div><div class="r" style="left:913px;top:365px;width:1px;height:18px;background:#ff80ff;"></div><div class="r" style="left:914px;top:365px;width:2px;height:18px;background:#8fc7fb;"></div><div class="r" style="left:916px;top:365px;width:1px;height:18px;background:#ff80ff;"></div><div class="r" style="left:917px;top:365px;width:1px;height:18px;background:#8fc7fb;"></div><div class="r" style="left:918px;top:365px;width:1px;height:18px;background:#ff80ff;"></div><div class="r" style="left:919px;top:365px;width:2px;height:18px;background:#8fc7fb;"></div><div class="r" style="left:921px;top:365px;width:1px;height:18px;background:#e491ff;"></div><div class="r" style="left:922px;top:365px;width:10px;height:18px;background:#8fc7fb;"></div><div class="r" style="left:932px;top:365px;width:2px;height:18px;background:#ff80ff;"></div><div class="r" style="left:902px;top:383px;width:1px;height:18px;background:#ffa098;"></div><div class="r" style="left:903px;top:383px;width:1px;height:18px;background:#ff9aab;"></div><div class="r" style="left:904px;top:383px;width:1px;height:18px;background:#ff9aab;"></div><div class="r" style="left:905px;top:383px;width:1px;height:18px;background:#ffa098;"></div><div class="r" style="left:906px;top:383px;width:1px;height:18px;background:#ff9aab;"></div><div class="r" style="left:907px;top:383px;width:1px;height:18px;background:#ff9aab;"></div><div class="r" style="left:908px;top:383px;width:1px;height:18px;background:#ffa098;"></div><div class="r" style="left:909px;top:383px;width:1px;height:18px;background:#ff9aab;"></div><div class="r" style="left:909px;top:383px;width:1px;height:18px;background:#ff9aab;"></div><div class="r" style="left:910px;top:383px;width:1px;height:18px;background:#ffa098;"></div><div class="r" style="left:911px;top:383px;width:1px;height:18px;background:#ff9aab;"></div><div class="r" style="left:912px;top:383px;width:1px;height:18px;background:#ff9aab;"></div><div class="r" style="left:913px;top:383px;width:1px;height:18px;background:#ffa098;"></div><div class="r" style="left:914px;top:383px;width:1px;height:18px;background:#ff9aab;"></div><div class="r" style="left:915px;top:383px;width:1px;height:18px;background:#ff9aab;"></div><div class="r" style="left:916px;top:383px;width:1px;height:18px;background:#ffa098;"></div><div class="r" style="left:917px;top:383px;width:1px;height:18px;background:#ff9aab;"></div><div class="r" style="left:918px;top:383px;width:1px;height:18px;background:#ff9aab;"></div><div class="r" style="left:919px;top:383px;width:1px;height:18px;background:#ffa098;"></div><div class="r" style="left:920px;top:383px;width:1px;height:18px;background:#ff9aab;"></div><div class="r" style="left:921px;top:383px;width:1px;height:18px;background:#ff9aab;"></div><div class="r" style="left:922px;top:383px;width:1px;height:18px;background:#ffa098;"></div><div class="r" style="left:923px;top:383px;width:1px;height:18px;background:#ff9aab;"></div><div class="r" style="left:924px;top:383px;width:1px;height:18px;background:#ff9aab;"></div><div class="r" style="left:925px;top:383px;width:1px;height:18px;background:#ffa098;"></div><div class="r" style="left:926px;top:383px;width:1px;height:18px;background:#ff9aab;"></div><div class="r" style="left:926px;top:383px;width:1px;height:18px;background:#ff9aab;"></div><div class="r" style="left:927px;top:383px;width:1px;height:18px;background:#ffa098;"></div><div class="r" style="left:928px;top:383px;width:1px;height:18px;background:#ff9aab;"></div><div class="r" style="left:929px;top:383px;width:1px;height:18px;background:#ff9aab;"></div><div class="r" style="left:930px;top:383px;width:1px;height:18px;background:#ffa098;"></div><div class="r" style="left:931px;top:383px;width:1px;height:18px;background:#ff9aab;"></div><div class="r" style="left:932px;top:383px;width:1px;height:18px;background:#ff9aab;"></div><div class="r" style="left:933px;top:383px;width:1px;height:18px;background:#ffa098;"></div><div class="r" style="left:903px;top:401px;width:3px;height:18px;background:#d2aefc;"></div><div class="r" style="left:906px;top:401px;width:1px;height:18px;background:#e6dcfa;"></div><div class="r" style="left:907px;top:401px;width:2px;height:18px;background:#d2aefc;"></div><div class="r" style="left:909px;top:401px;width:1px;height:18px;background:#e6dcfa;"></div><div class="r" style="left:910px;top:401px;width:3px;height:18px;background:#d2aefc;"></div><div class="r" style="left:913px;top:401px;width:1px;height:18px;background:#e6dcfa;"></div><div class="r" style="left:913px;top:401px;width:3px;height:18px;background:#d2aefc;"></div><div class="r" style="left:916px;top:401px;width:1px;height:18px;background:#e6dcfa;"></div><div class="r" style="left:916px;top:401px;width:2px;height:18px;background:#d2aefc;"></div><div class="r" style="left:918px;top:401px;width:1px;height:18px;background:#e6dcfa;"></div><div class="r" style="left:919px;top:401px;width:5px;height:18px;background:#d2aefc;"></div><div class="r" style="left:924px;top:401px;width:1px;height:18px;background:#e6dcfa;"></div><div class="r" style="left:925px;top:401px;width:1px;height:18px;background:#d2aefc;"></div><div class="r" style="left:926px;top:401px;width:1px;height:18px;background:#e6dcfa;"></div><div class="r" style="left:926px;top:401px;width:1px;height:18px;background:#d2aefc;"></div><div class="r" style="left:927px;top:401px;width:1px;height:18px;background:#e6dcfa;"></div><div class="r" style="left:928px;top:401px;width:1px;height:18px;background:#d2aefc;"></div><div class="r" style="left:929px;top:401px;width:1px;height:18px;background:#e6dcfa;"></div><div class="r" style="left:930px;top:401px;width:1px;height:18px;background:#d2aefc;"></div><div class="r" style="left:931px;top:401px;width:1px;height:18px;background:#e6dcfa;"></div><div class="r" style="left:932px;top:401px;width:2px;height:18px;background:#d2aefc;"></div><div class="r" style="left:582px;top:149px;width:143px;height:18px;background:#e1b688;"></div><div class="sl" style="left:503.5px;top:149px">cond_1</div><div class="r" style="left:582px;top:167px;width:143px;height:18px;background:#a6b2fd;"></div><div class="sl" style="left:503.5px;top:167px">then</div><div class="r" style="left:582px;top:185px;width:143px;height:18px;background:#84d0fb;"></div><div class="sl" style="left:503.5px;top:185px">_24</div><div class="r" style="left:582px;top:203px;width:143px;height:18px;background:#fe90c0;"></div><div class="sl" style="left:503.5px;top:203px">Adam</div><div class="r" style="left:582px;top:221px;width:143px;height:18px;background:#fe90c0;"></div><div class="sl" style="left:503.5px;top:221px">Adam</div><div class="r" style="left:950px;top:149px;width:148px;height:18px;background:#e1b688;"></div><div class="sl" style="left:874.0px;top:149px">cond_1</div><div class="r" style="left:950px;top:167px;width:148px;height:18px;background:#a6b2fd;"></div><div class="sl" style="left:874.0px;top:167px">then</div><div class="r" style="left:950px;top:185px;width:148px;height:18px;background:#84d0fb;"></div><div class="sl" style="left:874.0px;top:185px">_24</div><div class="r" style="left:950px;top:203px;width:148px;height:18px;background:#fe90c0;"></div><div class="sl" style="left:874.0px;top:203px">Adam</div><div class="r" style="left:950px;top:221px;width:148px;height:18px;background:#fe90c0;"></div><div class="sl" style="left:874.0px;top:221px">Adam</div><div class="r" style="left:582px;top:239px;width:2px;height:18px;background:#8fc7fb;"></div><div class="r" style="left:582px;top:257px;width:2px;height:18px;background:#ff9aab;"></div><div class="r" style="left:722px;top:239px;width:4px;height:18px;background:#8fc7fb;"></div><div class="r" style="left:722px;top:257px;width:4px;height:18px;background:#ff9aab;"></div><div class="r" style="left:950px;top:239px;width:3px;height:18px;background:#8fc7fb;"></div><div class="r" style="left:950px;top:257px;width:3px;height:18px;background:#ff9aab;"></div><div class="r" style="left:363px;top:423px;width:14px;height:18px;background:#8fc7fb;"></div><div class="r" style="left:377px;top:423px;width:2px;height:18px;background:#ff9aab;"></div><div class="r" style="left:379px;top:423px;width:2px;height:18px;background:#d8b8f8;"></div><div class="r" style="left:434px;top:423px;width:2px;height:18px;background:#c0c8ff;"></div><div class="r" style="left:525px;top:423px;width:1px;height:18px;background:#b8d8fa;"></div><div class="r" style="left:526px;top:423px;width:5px;height:18px;background:#ff9aab;"></div><div class="r" style="left:531px;top:423px;width:1px;height:18px;background:#c0c8f0;"></div><div class="r" style="left:532px;top:423px;width:2px;height:18px;background:#c8a8c0;"></div><div class="r" style="left:534px;top:423px;width:1px;height:18px;background:#84dcb4;"></div><div class="r" style="left:535px;top:423px;width:2px;height:18px;background:#90ccd8;"></div><div class="r" style="left:537px;top:423px;width:2px;height:18px;background:#88d898;"></div><div class="r" style="left:539px;top:423px;width:1px;height:18px;background:#a6b2fd;"></div><div class="r" style="left:540px;top:423px;width:1px;height:18px;background:#ff9aab;"></div><div class="r" style="left:541px;top:423px;width:1px;height:18px;background:#88d898;"></div><div class="r" style="left:542px;top:423px;width:1px;height:18px;background:#ff9aab;"></div><div class="r" style="left:543px;top:423px;width:1px;height:18px;background:#8fc7fb;"></div><div class="r" style="left:544px;top:423px;width:1px;height:18px;background:#88d898;"></div><div class="r" style="left:545px;top:423px;width:1px;height:18px;background:#ff9aab;"></div><div class="r" style="left:546px;top:423px;width:1px;height:18px;background:#8fc7fb;"></div><div class="r" style="left:547px;top:423px;width:1px;height:18px;background:#88d898;"></div><div class="r" style="left:548px;top:423px;width:1px;height:18px;background:#ff9aab;"></div><div class="r" style="left:549px;top:423px;width:1px;height:18px;background:#8fc7fb;"></div><div class="r" style="left:550px;top:423px;width:1px;height:18px;background:#ff9aab;"></div><div class="r" style="left:551px;top:423px;width:1px;height:18px;background:#8fc7fb;"></div><div class="r" style="left:552px;top:423px;width:1px;height:18px;background:#84dcb4;"></div><div class="r" style="left:553px;top:423px;width:1px;height:18px;background:#f0b0b0;"></div><div class="r" style="left:554px;top:423px;width:3px;height:18px;background:#c4acd4;"></div><div class="r" style="left:557px;top:423px;width:1px;height:18px;background:#a6b2fd;"></div><div class="r" style="left:558px;top:423px;width:1px;height:18px;background:#d8a8c8;"></div><div class="r" style="left:559px;top:423px;width:1px;height:18px;background:#8fc7fb;"></div><div class="r" style="left:560px;top:423px;width:1px;height:18px;background:#ff9aab;"></div><div class="r" style="left:561px;top:423px;width:1px;height:18px;background:#8fc7fb;"></div><div class="r" style="left:562px;top:423px;width:1px;height:18px;background:#ff9aab;"></div><div class="r" style="left:563px;top:423px;width:1px;height:18px;background:#8fc7fb;"></div><div class="r" style="left:564px;top:423px;width:2px;height:18px;background:#88d898;"></div><div class="r" style="left:582px;top:423px;width:3px;height:18px;background:#8fc7fb;"></div><div class="r" style="left:722px;top:423px;width:2px;height:18px;background:#ff9aab;"></div><div class="r" style="left:724px;top:423px;width:3px;height:18px;background:#a9d78a;"></div><div class="r" style="left:729px;top:423px;width:13px;height:18px;background:#8fc7fb;"></div><div class="r" style="left:742px;top:423px;width:3px;height:18px;background:#ff9aab;"></div><div class="r" style="left:745px;top:423px;width:1px;height:18px;background:#d8b8f8;"></div><div class="r" style="left:800px;top:423px;width:1px;height:18px;background:#c0c8ff;"></div><div class="r" style="left:876px;top:423px;width:2px;height:18px;background:#a8d4ff;"></div><div class="r" style="left:895px;top:423px;width:1px;height:18px;background:#b8d8fa;"></div><div class="r" style="left:896px;top:423px;width:5px;height:18px;background:#ff9aab;"></div><div class="r" style="left:901px;top:423px;width:1px;height:18px;background:#c0c8f0;"></div><div class="r" style="left:902px;top:423px;width:2px;height:18px;background:#c8a8c0;"></div><div class="r" style="left:904px;top:423px;width:1px;height:18px;background:#84dcb4;"></div><div class="r" style="left:905px;top:423px;width:1px;height:18px;background:#90ccd8;"></div><div class="r" style="left:906px;top:423px;width:2px;height:18px;background:#88d898;"></div><div class="r" style="left:908px;top:423px;width:1px;height:18px;background:#a6b2fd;"></div><div class="r" style="left:909px;top:423px;width:1px;height:18px;background:#ff9aab;"></div><div class="r" style="left:910px;top:423px;width:1px;height:18px;background:#88d898;"></div><div class="r" style="left:911px;top:423px;width:1px;height:18px;background:#ff9aab;"></div><div class="r" style="left:912px;top:423px;width:1px;height:18px;background:#8fc7fb;"></div><div class="r" style="left:913px;top:423px;width:1px;height:18px;background:#88d898;"></div><div class="r" style="left:914px;top:423px;width:1px;height:18px;background:#ff9aab;"></div><div class="r" style="left:915px;top:423px;width:1px;height:18px;background:#8fc7fb;"></div><div class="r" style="left:916px;top:423px;width:1px;height:18px;background:#88d898;"></div><div class="r" style="left:917px;top:423px;width:1px;height:18px;background:#ff9aab;"></div><div class="r" style="left:918px;top:423px;width:1px;height:18px;background:#8fc7fb;"></div><div class="r" style="left:919px;top:423px;width:1px;height:18px;background:#ff9aab;"></div><div class="r" style="left:920px;top:423px;width:1px;height:18px;background:#8fc7fb;"></div><div class="r" style="left:921px;top:423px;width:1px;height:18px;background:#84dcb4;"></div><div class="r" style="left:922px;top:423px;width:1px;height:18px;background:#f0b0b0;"></div><div class="r" style="left:923px;top:423px;width:2px;height:18px;background:#c4acd4;"></div><div class="r" style="left:925px;top:423px;width:1px;height:18px;background:#a6b2fd;"></div><div class="r" style="left:926px;top:423px;width:1px;height:18px;background:#d8a8c8;"></div><div class="r" style="left:927px;top:423px;width:1px;height:18px;background:#8fc7fb;"></div><div class="r" style="left:928px;top:423px;width:1px;height:18px;background:#ff9aab;"></div><div class="r" style="left:929px;top:423px;width:1px;height:18px;background:#8fc7fb;"></div><div class="r" style="left:930px;top:423px;width:1px;height:18px;background:#ff9aab;"></div><div class="r" style="left:931px;top:423px;width:1px;height:18px;background:#8fc7fb;"></div><div class="r" style="left:932px;top:423px;width:2px;height:18px;background:#88d898;"></div><div class="r" style="left:950px;top:423px;width:1px;height:18px;background:#8fc7fb;"></div><div class="r" style="left:951px;top:423px;width:2px;height:18px;background:#ff9aab;"></div><div class="r" style="left:360px;top:463px;width:365px;height:18px;background:#e491ff;"></div><div class="sl" style="left:392.5px;top:463px">TraceContext</div><div class="r" style="left:360px;top:481px;width:365px;height:18px;background:#a9d78a;"></div><div class="sl" style="left:392.5px;top:481px">EagerExecute: __inference_train_function_260252</div><div class="r" style="left:360px;top:499px;width:365px;height:18px;background:#b3cf88;"></div><div class="sl" style="left:392.5px;top:499px">EagerLocalExecute: __inference_train_function_260252</div><div class="r" style="left:362px;top:517px;width:363px;height:18px;background:#84d0fb;"></div><div class="sl" style="left:393.5px;top:517px">EagerKernelExecute</div><div class="r" style="left:360px;top:517px;width:2px;height:18px;background:#ffa09c;"></div><div class="r" style="left:362px;top:535px;width:363px;height:18px;background:#84d0fb;"></div><div class="sl" style="left:393.5px;top:535px">FunctionRun</div><div class="r" style="left:360px;top:535px;width:2px;height:18px;background:#ff9aab;"></div><div class="r" style="left:360px;top:553px;width:2px;height:18px;background:#e491ff;"></div><div class="r" style="left:360px;top:571px;width:2px;height:18px;background:#8fc7fb;"></div><div class="r" style="left:726px;top:463px;width:373px;height:18px;background:#e491ff;"></div><div class="sl" style="left:762.5px;top:463px">TraceContext</div><div class="r" style="left:726px;top:481px;width:372px;height:18px;background:#a9d78a;"></div><div class="sl" style="left:762.0px;top:481px">EagerExecute: __inference_train_function_260252</div><div class="r" style="left:726px;top:499px;width:372px;height:18px;background:#b3cf88;"></div><div class="sl" style="left:762.0px;top:499px">EagerLocalExecute: __inference_train_function_260252</div><div class="r" style="left:728px;top:517px;width:370px;height:18px;background:#84d0fb;"></div><div class="sl" style="left:763px;top:517px">EagerKernelExecute</div><div class="r" style="left:725px;top:517px;width:3px;height:18px;background:#ffa09c;"></div><div class="r" style="left:728px;top:535px;width:370px;height:18px;background:#84d0fb;"></div><div class="sl" style="left:763px;top:535px">FunctionRun</div><div class="r" style="left:725px;top:535px;width:3px;height:18px;background:#ff9aab;"></div><div class="r" style="left:725px;top:553px;width:3px;height:18px;background:#e491ff;"></div><div class="r" style="left:725px;top:571px;width:3px;height:18px;background:#8fc7fb;"></div><div class="r" style="left:363px;top:593px;width:15px;height:18px;background:#8fc7fb;"></div><div class="r" style="left:729px;top:593px;width:15px;height:18px;background:#8fc7fb;"></div><div class="r" style="left:405px;top:593px;width:1px;height:18px;background:#88c4fa;"></div><div class="r" style="left:537px;top:593px;width:1px;height:18px;background:#88c4fa;"></div><div class="r" style="left:575px;top:593px;width:1px;height:18px;background:#88c4fa;"></div><div class="r" style="left:582px;top:593px;width:1px;height:18px;background:#88c4fa;"></div><div class="r" style="left:770px;top:593px;width:1px;height:18px;background:#88c4fa;"></div><div class="r" style="left:771px;top:593px;width:1px;height:18px;background:#c4e2fd;"></div><div class="r" style="left:879px;top:593px;width:1px;height:18px;background:#88c4fa;"></div><div class="r" style="left:893px;top:593px;width:1px;height:18px;background:#88c4fa;"></div><div class="r" style="left:894px;top:593px;width:1px;height:18px;background:#c4e2fd;"></div><div class="r" style="left:933px;top:593px;width:1px;height:18px;background:#88c4fa;"></div><div class="r" style="left:934px;top:593px;width:1px;height:18px;background:#c4e2fd;"></div><div class="r" style="left:949px;top:593px;width:1px;height:18px;background:#88c4fa;"></div><div class="r" style="left:950px;top:593px;width:1px;height:18px;background:#c4e2fd;"></div><div class="r" style="left:363px;top:615px;width:15px;height:18px;background:#8fc7fb;"></div><div class="r" style="left:729px;top:615px;width:15px;height:18px;background:#8fc7fb;"></div><div class="r" style="left:405px;top:615px;width:1px;height:18px;background:#88c4fa;"></div><div class="r" style="left:516px;top:615px;width:1px;height:18px;background:#88c4fa;"></div><div class="r" style="left:540px;top:615px;width:1px;height:18px;background:#88c4fa;"></div><div class="r" style="left:578px;top:615px;width:1px;height:18px;background:#88c4fa;"></div><div class="r" style="left:579px;top:615px;width:1px;height:18px;background:#c4e2fd;"></div><div class="r" style="left:770px;top:615px;width:1px;height:18px;background:#88c4fa;"></div><div class="r" style="left:909px;top:615px;width:1px;height:18px;background:#88c4fa;"></div><div class="r" style="left:910px;top:615px;width:1px;height:18px;background:#c4e2fd;"></div><div class="r" style="left:947px;top:615px;width:1px;height:18px;background:#88c4fa;"></div><div class="r" style="left:948px;top:615px;width:1px;height:18px;background:#c4e2fd;"></div><div class="r" style="left:363px;top:637px;width:15px;height:18px;background:#8fc7fb;"></div><div class="r" style="left:729px;top:637px;width:15px;height:18px;background:#8fc7fb;"></div><div class="r" style="left:405px;top:637px;width:1px;height:18px;background:#88c4fa;"></div><div class="r" style="left:524px;top:637px;width:1px;height:18px;background:#88c4fa;"></div><div class="r" style="left:525px;top:637px;width:1px;height:18px;background:#c4e2fd;"></div><div class="r" style="left:542px;top:637px;width:1px;height:18px;background:#88c4fa;"></div><div class="r" style="left:580px;top:637px;width:1px;height:18px;background:#88c4fa;"></div><div class="r" style="left:770px;top:637px;width:1px;height:18px;background:#88c4fa;"></div><div class="r" style="left:888px;top:637px;width:1px;height:18px;background:#88c4fa;"></div><div class="r" style="left:909px;top:637px;width:1px;height:18px;background:#88c4fa;"></div><div class="r" style="left:910px;top:637px;width:1px;height:18px;background:#c4e2fd;"></div><div class="r" style="left:947px;top:637px;width:1px;height:18px;background:#88c4fa;"></div><div class="r" style="left:948px;top:637px;width:1px;height:18px;background:#c4e2fd;"></div><div class="r" style="left:363px;top:659px;width:15px;height:18px;background:#8fc7fb;"></div><div class="r" style="left:729px;top:659px;width:15px;height:18px;background:#8fc7fb;"></div><div class="r" style="left:404px;top:659px;width:1px;height:18px;background:#88c4fa;"></div><div class="r" style="left:405px;top:659px;width:1px;height:18px;background:#c4e2fd;"></div><div class="r" style="left:536px;top:659px;width:1px;height:18px;background:#88c4fa;"></div><div class="r" style="left:574px;top:659px;width:1px;height:18px;background:#88c4fa;"></div><div class="r" style="left:575px;top:659px;width:1px;height:18px;background:#c4e2fd;"></div><div class="r" style="left:770px;top:659px;width:1px;height:18px;background:#88c4fa;"></div><div class="r" style="left:909px;top:659px;width:1px;height:18px;background:#88c4fa;"></div><div class="r" style="left:910px;top:659px;width:1px;height:18px;background:#c4e2fd;"></div><div class="r" style="left:948px;top:659px;width:1px;height:18px;background:#88c4fa;"></div><div class="r" style="left:363px;top:681px;width:15px;height:18px;background:#8fc7fb;"></div><div class="r" style="left:729px;top:681px;width:15px;height:18px;background:#8fc7fb;"></div><div class="r" style="left:405px;top:681px;width:1px;height:18px;background:#88c4fa;"></div><div class="r" style="left:519px;top:681px;width:1px;height:18px;background:#88c4fa;"></div><div class="r" style="left:538px;top:681px;width:1px;height:18px;background:#88c4fa;"></div><div class="r" style="left:539px;top:681px;width:1px;height:18px;background:#c4e2fd;"></div><div class="r" style="left:576px;top:681px;width:1px;height:18px;background:#88c4fa;"></div><div class="r" style="left:577px;top:681px;width:1px;height:18px;background:#c4e2fd;"></div><div class="r" style="left:770px;top:681px;width:1px;height:18px;background:#88c4fa;"></div><div class="r" style="left:900px;top:681px;width:1px;height:18px;background:#88c4fa;"></div><div class="r" style="left:901px;top:681px;width:1px;height:18px;background:#c4e2fd;"></div><div class="r" style="left:939px;top:681px;width:1px;height:18px;background:#88c4fa;"></div><div class="r" style="left:363px;top:703px;width:15px;height:18px;background:#8fc7fb;"></div><div class="r" style="left:729px;top:703px;width:15px;height:18px;background:#8fc7fb;"></div><div class="r" style="left:405px;top:703px;width:1px;height:18px;background:#88c4fa;"></div><div class="r" style="left:523px;top:703px;width:1px;height:18px;background:#88c4fa;"></div><div class="r" style="left:542px;top:703px;width:1px;height:18px;background:#88c4fa;"></div><div class="r" style="left:581px;top:703px;width:1px;height:18px;background:#88c4fa;"></div><div class="r" style="left:582px;top:703px;width:1px;height:18px;background:#c4e2fd;"></div><div class="r" style="left:770px;top:703px;width:1px;height:18px;background:#88c4fa;"></div><div class="r" style="left:905px;top:703px;width:1px;height:18px;background:#88c4fa;"></div><div class="r" style="left:906px;top:703px;width:1px;height:18px;background:#c4e2fd;"></div><div class="r" style="left:944px;top:703px;width:1px;height:18px;background:#88c4fa;"></div><div class="r" style="left:948px;top:703px;width:1px;height:18px;background:#88c4fa;"></div><div class="r" style="left:949px;top:703px;width:1px;height:18px;background:#c4e2fd;"></div><div class="r" style="left:363px;top:725px;width:15px;height:18px;background:#8fc7fb;"></div><div class="r" style="left:729px;top:725px;width:15px;height:18px;background:#8fc7fb;"></div><div class="r" style="left:405px;top:725px;width:1px;height:18px;background:#88c4fa;"></div><div class="r" style="left:542px;top:725px;width:1px;height:18px;background:#88c4fa;"></div><div class="r" style="left:580px;top:725px;width:1px;height:18px;background:#88c4fa;"></div><div class="r" style="left:581px;top:725px;width:1px;height:18px;background:#c4e2fd;"></div><div class="r" style="left:770px;top:725px;width:1px;height:18px;background:#88c4fa;"></div><div class="r" style="left:904px;top:725px;width:1px;height:18px;background:#88c4fa;"></div><div class="r" style="left:942px;top:725px;width:1px;height:18px;background:#88c4fa;"></div><div class="r" style="left:943px;top:725px;width:1px;height:18px;background:#c4e2fd;"></div><div class="r" style="left:363px;top:747px;width:15px;height:18px;background:#8fc7fb;"></div><div class="r" style="left:729px;top:747px;width:15px;height:18px;background:#8fc7fb;"></div><div class="r" style="left:405px;top:747px;width:1px;height:18px;background:#88c4fa;"></div><div class="r" style="left:513px;top:747px;width:1px;height:18px;background:#88c4fa;"></div><div class="r" style="left:525px;top:747px;width:1px;height:18px;background:#88c4fa;"></div><div class="r" style="left:526px;top:747px;width:1px;height:18px;background:#c4e2fd;"></div><div class="r" style="left:565px;top:747px;width:1px;height:18px;background:#88c4fa;"></div><div class="r" style="left:566px;top:747px;width:1px;height:18px;background:#c4e2fd;"></div><div class="r" style="left:770px;top:747px;width:1px;height:18px;background:#88c4fa;"></div><div class="r" style="left:877px;top:747px;width:1px;height:18px;background:#88c4fa;"></div><div class="r" style="left:895px;top:747px;width:1px;height:18px;background:#88c4fa;"></div><div class="r" style="left:896px;top:747px;width:1px;height:18px;background:#c4e2fd;"></div><div class="r" style="left:934px;top:747px;width:1px;height:18px;background:#88c4fa;"></div><div class="r" style="left:363px;top:769px;width:8px;height:18px;background:#ff80ff;"></div><div class="r" style="left:372px;top:769px;width:6px;height:18px;background:#ff80ff;"></div><div class="r" style="left:363px;top:787px;width:8px;height:18px;background:#8fc7fb;"></div><div class="r" style="left:372px;top:787px;width:6px;height:18px;background:#8fc7fb;"></div><div class="r" style="left:404px;top:769px;width:2px;height:18px;background:#ff80ff;"></div><div class="r" style="left:404px;top:787px;width:2px;height:18px;background:#a8d0ff;"></div><div class="r" style="left:404px;top:805px;width:2px;height:16px;background:#c8eccc;"></div><div class="r" style="left:582px;top:769px;width:4px;height:18px;background:#ff80ff;"></div><div class="r" style="left:582px;top:787px;width:2px;height:18px;background:#8fc7fb;"></div><div class="r" style="left:584px;top:787px;width:2px;height:18px;background:#a9d78a;"></div><div class="r" style="left:722px;top:769px;width:20px;height:18px;background:#ff80ff;"></div><div class="r" style="left:724px;top:769px;width:1px;height:18px;background:#ffc4ff;"></div><div class="r" style="left:729px;top:769px;width:1px;height:18px;background:#ffc4ff;"></div><div class="r" style="left:735px;top:769px;width:1px;height:18px;background:#ffc4ff;"></div><div class="r" style="left:722px;top:787px;width:6px;height:18px;background:#84dcb4;"></div><div class="r" style="left:724px;top:787px;width:1px;height:18px;background:#d8f4e8;"></div><div class="r" style="left:728px;top:787px;width:1px;height:18px;background:#d0a0a8;"></div><div class="r" style="left:729px;top:787px;width:6px;height:18px;background:#8fc7fb;"></div><div class="r" style="left:735px;top:787px;width:1px;height:18px;background:#c8ecd0;"></div><div class="r" style="left:736px;top:787px;width:5px;height:18px;background:#8fc7fb;"></div><div class="r" style="left:741px;top:787px;width:1px;height:18px;background:#a9d78a;"></div><div class="r" style="left:770px;top:769px;width:118px;height:18px;background:#a6b2fd;"></div><div class="sl" style="left:679px;top:769px">ExecutorState::Process</div><div class="r" style="left:888px;top:769px;width:21px;height:18px;background:#ff80ff;"></div><div class="r" style="left:889px;top:769px;width:1px;height:18px;background:#ffc4ff;"></div><div class="r" style="left:891px;top:769px;width:1px;height:18px;background:#ffc4ff;"></div><div class="r" style="left:899px;top:769px;width:1px;height:18px;background:#ffc4ff;"></div><div class="r" style="left:904px;top:769px;width:1px;height:18px;background:#d8c0ff;"></div><div class="r" style="left:909px;top:769px;width:25px;height:18px;background:#a6b2fd;"></div><div class="sl" style="left:772px;top:769px">E...</div><div class="r" style="left:934px;top:769px;width:1px;height:18px;background:#e8d8ff;"></div><div class="r" style="left:935px;top:769px;width:14px;height:18px;background:#ff80ff;"></div><div class="r" style="left:949px;top:769px;width:3px;height:18px;background:#a6b2fd;"></div><div class="r" style="left:952px;top:769px;width:1px;height:18px;background:#f0e0ff;"></div><div class="r" style="left:953px;top:769px;width:1px;height:18px;background:#ff80ff;"></div><div class="r" style="left:770px;top:787px;width:13px;height:18px;background:#c3c68a;"></div><div class="r" style="left:783px;top:787px;width:103px;height:18px;background:#82dbe0;"></div><div class="sl" style="left:685px;top:787px">replica_1/model/t...</div><div class="r" style="left:886px;top:787px;width:2px;height:18px;background:#8fc7fb;"></div><div class="r" style="left:888px;top:787px;width:21px;height:18px;background:#84dcb4;"></div><div class="r" style="left:889px;top:787px;width:1px;height:18px;background:#d8f4e8;"></div><div class="r" style="left:891px;top:787px;width:1px;height:18px;background:#d8f4e8;"></div><div class="r" style="left:892px;top:787px;width:2px;height:18px;background:#8fc7fb;"></div><div class="r" style="left:899px;top:787px;width:1px;height:18px;background:#d8f4e8;"></div><div class="r" style="left:904px;top:787px;width:1px;height:18px;background:#d8f4e8;"></div><div class="r" style="left:908px;top:787px;width:2px;height:18px;background:#8fc7fb;"></div><div class="r" style="left:915px;top:787px;width:20px;height:18px;background:#8fc7fb;"></div><div class="r" style="left:935px;top:787px;width:13px;height:18px;background:#84dcb4;"></div><div class="r" style="left:948px;top:787px;width:3px;height:18px;background:#88d0e8;"></div><div class="r" style="left:951px;top:787px;width:3px;height:18px;background:#ff80ff;"></div><div class="r" style="left:770px;top:805px;width:1px;height:16px;background:#a8dca8;"></div><div class="r" style="left:783px;top:805px;width:1px;height:16px;background:#ff80ff;"></div><div class="r" style="left:888px;top:805px;width:1px;height:16px;background:#a8dca8;"></div>
<div class="hdr" style="top:0"><span class="htri"></span><span class="t">/device:GPU:7 (pid 7)</span><span class="x">X</span></div>
<div class="hdr" style="top:445px;border-top:1px solid #fff"><span class="htri"></span><span class="t">/host:CPU (pid 49)</span><span class="x">X</span></div>
<div class="r" style="left:360px;top:0;width:1px;height:17px;background:#dcdcdc"></div><div class="r" style="left:360px;top:446px;width:1px;height:17px;background:#dcdcdc"></div><div class="r" style="left:565px;top:0;width:1px;height:17px;background:#dcdcdc"></div><div class="r" style="left:565px;top:446px;width:1px;height:17px;background:#dcdcdc"></div><div class="r" style="left:770px;top:0;width:1px;height:17px;background:#dcdcdc"></div><div class="r" style="left:770px;top:446px;width:1px;height:17px;background:#dcdcdc"></div><div class="r" style="left:976px;top:0;width:1px;height:17px;background:#dcdcdc"></div><div class="r" style="left:976px;top:446px;width:1px;height:17px;background:#dcdcdc"></div><div class="r" style="left:1181px;top:0;width:1px;height:17px;background:#dcdcdc"></div><div class="r" style="left:1181px;top:446px;width:1px;height:17px;background:#dcdcdc"></div>
</div>
<div id="sb"><div id="sbthumb"></div><div id="sbdown"></div></div>
<div id="vline"></div>
<div id="side">
 <div class="tab" style="top:25.5px;color:#000">Metrics</div>
 <div class="tab" style="top:94px">Frame Data</div>
 <div class="tab" style="top:187.3px">Input Latency</div>
 <div class="tab" style="top:290px">Alerts</div>
</div>
<svg width="35" height="148" viewBox="0 0 35 148" style="position:absolute;left:1137px;top:157px">
<defs><linearGradient id="gsel" x1="0" y1="0" x2="0" y2="1"><stop offset="0" stop-color="#e9e9e9"/><stop offset="1" stop-color="#d6d6d6"/></linearGradient>
<filter id="sh" x="-20%" y="-5%" width="140%" height="115%"><feDropShadow dx="0" dy="1" stdDeviation="1" flood-color="#000" flood-opacity="0.22"/></filter></defs>
<g transform="translate(2,2)">
<rect x="0.5" y="0.5" width="30" height="141" rx="4" fill="#dedede" stroke="#b4b4b4" filter="url(#sh)"/>
<g fill="#8c8c8c"><rect x="3" y="4" width="1" height="1"/><rect x="5" y="4" width="1" height="1"/><rect x="7" y="4" width="1" height="1"/><rect x="9" y="4" width="1" height="1"/><rect x="11" y="4" width="1" height="1"/><rect x="13" y="4" width="1" height="1"/><rect x="15" y="4" width="1" height="1"/><rect x="17" y="4" width="1" height="1"/><rect x="19" y="4" width="1" height="1"/><rect x="21" y="4" width="1" height="1"/><rect x="23" y="4" width="1" height="1"/><rect x="25" y="4" width="1" height="1"/><rect x="3" y="6" width="1" height="1"/><rect x="5" y="6" width="1" height="1"/><rect x="7" y="6" width="1" height="1"/><rect x="9" y="6" width="1" height="1"/><rect x="11" y="6" width="1" height="1"/><rect x="13" y="6" width="1" height="1"/><rect x="15" y="6" width="1" height="1"/><rect x="17" y="6" width="1" height="1"/><rect x="19" y="6" width="1" height="1"/><rect x="21" y="6" width="1" height="1"/><rect x="23" y="6" width="1" height="1"/><rect x="25" y="6" width="1" height="1"/><rect x="3" y="8" width="1" height="1"/><rect x="5" y="8" width="1" height="1"/><rect x="7" y="8" width="1" height="1"/><rect x="9" y="8" width="1" height="1"/><rect x="11" y="8" width="1" height="1"/><rect x="13" y="8" width="1" height="1"/><rect x="15" y="8" width="1" height="1"/><rect x="17" y="8" width="1" height="1"/><rect x="19" y="8" width="1" height="1"/><rect x="21" y="8" width="1" height="1"/><rect x="23" y="8" width="1" height="1"/><rect x="25" y="8" width="1" height="1"/></g>
<g stroke-width="1">
<line x1="1" y1="14.5" x2="29" y2="14.5" stroke="#bcbcbc"/><line x1="1" y1="15.5" x2="29" y2="15.5" stroke="#f6f6f6"/>
<line x1="1" y1="46.5" x2="29" y2="46.5" stroke="#bcbcbc"/><line x1="1" y1="47.5" x2="29" y2="47.5" stroke="#f6f6f6"/>
<line x1="1" y1="78.5" x2="29" y2="78.5" stroke="#bcbcbc"/><line x1="1" y1="79.5" x2="29" y2="79.5" stroke="#f6f6f6"/>
<line x1="1" y1="110.5" x2="29" y2="110.5" stroke="#bcbcbc"/><line x1="1" y1="111.5" x2="29" y2="111.5" stroke="#f6f6f6"/>
</g>
<path d="M10.2,22.3 L10.2,34.2 L13.3,31.2 L16.6,37.2 L19,36 L15.7,30 L19.6,29.8 Z" fill="#808080"/>
<g fill="#858585">
<rect x="8" y="60.1" width="13.2" height="2.4"/><rect x="13.4" y="55" width="2.4" height="13"/>
<path d="M14.6,52.6 L10.9,57 L18.3,57 Z M14.6,70 L10.9,65.6 L18.3,65.6 Z M5.9,61.3 L10.3,57.6 L10.3,65 Z M23.3,61.3 L18.9,57.6 L18.9,65 Z"/>
</g>
<rect x="2.6" y="81.6" width="24" height="24" rx="3.5" fill="url(#gsel)" stroke="#8c8c8c" stroke-width="1.2"/>
<path d="M15.1,85.6 L10.7,89.2 L12.5,89.2 L12.5,95 L8.8,95 L15.1,102.2 L21.4,95 L17.7,95 L17.7,89.2 L19.5,89.2 Z" fill="#1c1c1c"/>
<g fill="#8a8a8a">
<rect x="4.8" y="118" width="1.2" height="15"/><rect x="23" y="118" width="1.2" height="15"/>
<rect x="10" y="124.2" width="9" height="2.5"/>
<path d="M7,125.4 L11.6,121 L11.6,129.8 Z M22,125.4 L17.4,121 L17.4,129.8 Z"/>
</g>
</g></svg>
<div id="drag"></div>
<div id="tabs"><span id="sel">1 item selected.</span><span id="slice">Slice (1)</span></div>
<div id="tbl"><div class="k" style="left:13px;top:2px">Title</div><div class="k" style="left:157px;top:2px">MemcpyD2H</div><div class="k" style="left:13px;top:20px">User Friendly Category</div><div class="k" style="left:157px;top:20px">other</div><div class="k" style="left:13px;top:38px">Start</div><div class="k" style="left:13px;top:56px">Wall Duration</div><div class="k" style="left:10px;top:74px">Args</div><div style="position:absolute;left:1.2px;top:78px;width:0;height:0;border-left:3.7px solid transparent;border-right:3.7px solid transparent;border-top:7.5px solid #000"></div><div class="k" style="left:29px;top:94px">annotation</div><div class="m" style="left:157px;top:95px">"model/transformer_v2/Transformer/decode/Cast_1/_2705:_Send#from=model/transformer_v2/Transformer/decode/Cast_1,to=model/tf_op_layer_Shape/Shape#::#edge_30402_model/transformer_v2/Transformer/decode/Cast_1"</div><div class="k" style="left:29px;top:112px">context_id</div><div class="m" style="left:157px;top:113px">"$$1"</div><div class="k" style="left:29px;top:130px">correlation_id</div><div class="m" style="left:157px;top:131px">"2736152"</div><div class="k" style="left:29px;top:148px">edge_name</div><div class="m" style="left:157px;top:149px">"edge_30402_model/transformer_v2/Transformer/decode/Cast_1"</div><div class="k" style="left:29px;top:166px">from</div><div class="m" style="left:157px;top:167px">"model/transformer_v2/Transformer/decode/Cast_1"</div><div class="k" style="left:29px;top:184px">group_id</div><div class="m" style="left:157px;top:185px">"0"</div><div class="k" style="left:29px;top:202px">memcpy_details</div><div class="m" style="left:157px;top:203px">"size:402743184 dest:0 async:1"</div><div class="k" style="left:29px;top:220px">to</div><div class="m" style="left:157px;top:221px">"model/tf_op_layer_Shape/Shape"</div><svg style="position:absolute;left:250px;top:4px" width="13" height="12" viewBox="0 0 13 12"><line x1="7.5" y1="7" x2="11.5" y2="10.5" stroke="#f08a1c" stroke-width="2.2" stroke-linecap="round"/><circle cx="5" cy="4.6" r="3.9" fill="#9fd6f6" stroke="#5aa8d8" stroke-width="1"/><circle cx="4" cy="3.6" r="1.5" fill="#e4f4fd"/></svg></div>
<div id="hsb"><div id="hsbthumb"></div><div style="position:absolute;left:5px;top:3px;width:0;height:0;border-top:3px solid transparent;border-bottom:3px solid transparent;border-right:4px solid #a0a0a0"></div></div>
</body></html>
